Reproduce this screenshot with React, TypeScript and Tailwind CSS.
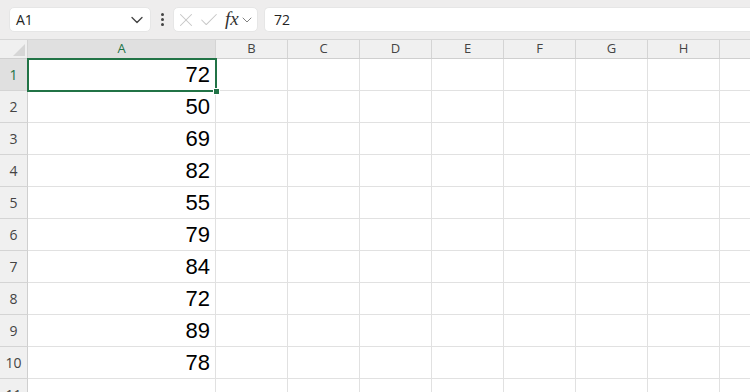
import { ChevronDown, X, Check } from "lucide-react"

const columns = ["B", "C", "D", "E", "F", "G", "H", ""]
const values = [72, 50, 69, 82, 55, 79, 84, 72, 89, 78]

export default function App() {
  return (
    <div className="w-[750px] h-[392px] overflow-hidden bg-white relative" style={{ fontFamily: "'Open Sans', 'Noto Sans', sans-serif" }}>
      {/* formula bar */}
      <div className="h-[40px] bg-[#eeeded] flex items-center pl-[9px] gap-[6px] border-b border-[#d6d6d6]">
        <div className="w-[142px] h-[25px] bg-white rounded-[5px] flex items-center justify-between pl-[6px] pr-[3px] border border-[#e6e6e6]">
          <span className="text-[14px] text-[#242424]">A1</span>
          <ChevronDown className="w-[20px] h-[20px] text-[#444]" strokeWidth={1.6} />
        </div>
        <div className="w-[10px] flex flex-col items-center gap-[2px]">
          <span className="w-[3px] h-[3px] rounded-full bg-[#444]" />
          <span className="w-[3px] h-[3px] rounded-full bg-[#444]" />
          <span className="w-[3px] h-[3px] rounded-full bg-[#444]" />
        </div>
        <div className="w-[85px] h-[25px] bg-white rounded-[5px] flex items-center pl-[1px] border border-[#e6e6e6]">
          <X className="w-[22px] h-[22px] text-[#c6c6c6]" strokeWidth={1.1} />
          <Check className="w-[22px] h-[22px] text-[#c6c6c6] ml-[1px]" strokeWidth={1.1} />
          <span className="ml-[5px] text-[19px] italic text-[#333] leading-none -mt-[2px]" style={{ fontFamily: "'Liberation Serif', serif" }}>fx</span>
          <ChevronDown className="w-[16px] h-[16px] text-[#777]" strokeWidth={1.4} />
        </div>
        <div className="flex-1 h-[25px] bg-white rounded-l-[5px] flex items-center pl-[9px] border border-r-0 border-[#e6e6e6]">
          <span className="text-[14px] text-[#242424]">72</span>
        </div>
      </div>

      {/* column headers */}
      <div className="flex h-[19px] bg-[#f0f0f0] border-b border-[#cfcfcf]">
        <div className="w-[28px] shrink-0 border-r border-[#d4d4d4] relative">
          <svg className="absolute right-[2px] bottom-[2px]" width="12" height="12" viewBox="0 0 12 12">
            <polygon points="12,0 12,12 0,12" fill="#d6d6d6" />
          </svg>
        </div>
        <div className="w-[188px] shrink-0 bg-[#e0e0e0] border-r border-[#d4d4d4] flex items-center justify-center text-[13px] text-[#217346]">
          A
        </div>
        {columns.map((c, i) => (
          <div key={i} className="w-[72px] shrink-0 border-r border-[#d4d4d4] flex items-center justify-center text-[13px] text-[#444]">
            {c}
          </div>
        ))}
      </div>

      {/* rows */}
      {[...values, null].map((v, r) => (
        <div key={r} className="flex h-[32px]">
          <div
            className={
              r === 0
                ? "w-[28px] shrink-0 bg-[#e0e0e0] border-r border-[#cfcfcf] border-b border-b-[#d4d4d4] flex items-center justify-center text-[14px] text-[#217346]"
                : "w-[28px] shrink-0 bg-[#f0f0f0] border-r border-[#cfcfcf] border-b border-b-[#d4d4d4] flex items-center justify-center text-[14px] text-[#444]"
            }
          >
            {r + 1}
          </div>
          <div
            className="w-[188px] shrink-0 border-r border-b border-[#e1e1e1] flex items-center justify-end pr-[5px] text-[22px] text-black"
            style={{ fontFamily: "'Liberation Sans', Arial, sans-serif" }}
          >
            {v}
          </div>
          {columns.map((c, i) => (
            <div key={i} className="w-[72px] shrink-0 border-r border-b border-[#e1e1e1]" />
          ))}
        </div>
      ))}

      {/* active cell */}
      <div className="absolute left-[27px] top-[58px] w-[190px] h-[34px] border-2 border-[#217346] pointer-events-none">
        <div className="absolute -right-[5px] -bottom-[5px] w-[7px] h-[7px] bg-[#217346] border border-white" />
      </div>
    </div>
  )
}
